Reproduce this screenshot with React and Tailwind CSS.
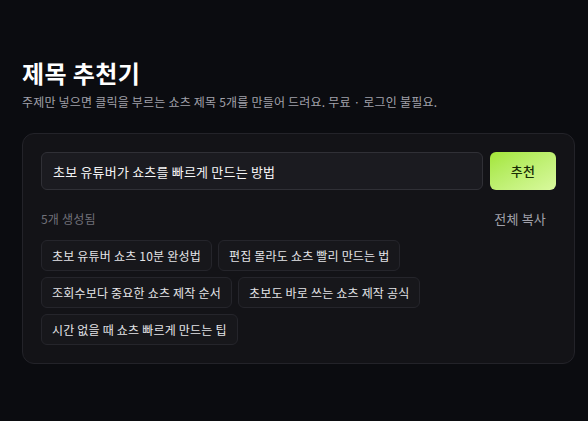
const titles = [
  '초보 유튜버 쇼츠 10분 완성법',
  '편집 몰라도 쇼츠 빨리 만드는 법',
  '조회수보다 중요한 쇼츠 제작 순서',
  '초보도 바로 쓰는 쇼츠 제작 공식',
  '시간 없을 때 쇼츠 빠르게 만드는 팁',
];

export default function App() {
  return (
    <div
      className="min-h-screen w-full bg-[#0b0c10] text-white tracking-[0.2px]"
      style={{ fontFamily: '"Noto Sans CJK KR", "Noto Sans", sans-serif' }}
    >
      <div className="pl-[22px] pr-[13px] pt-[56px]">
        <h1 className="text-[24px] font-bold leading-[34px] tracking-[0.4px]">제목 추천기</h1>
        <p className="mt-[3px] text-[12px] leading-[18px] text-[#a1a1aa]">
          주제만 넣으면 클릭을 부르는 쇼츠 제목 5개를 만들어 드려요. 무료 · 로그인 불필요.
        </p>

        {/* Main card */}
        <div className="mt-[22px] rounded-[12px] border border-[#232329] bg-[#131317] p-[18px]">
          <div className="flex gap-[7px]">
            <input
              className="h-[38px] flex-1 rounded-[6px] border border-[#303036] bg-[#1b1b20] px-[11px] text-[13px] tracking-[0.2px] text-[#f4f4f5] outline-none"
              defaultValue="초보 유튜버가 쇼츠를 빠르게 만드는 방법"
            />
            <button className="h-[38px] w-[66px] rounded-[6px] bg-gradient-to-br from-[#a3e635] to-[#d9f99d] text-[13px] font-medium text-[#1a2e05]">
              추천
            </button>
          </div>

          <div className="mt-[19px] flex h-[20px] items-center justify-between">
            <span className="text-[12px] text-[#71717a]">5개 생성됨</span>
            <button className="pr-[10px] text-[13px] text-[#a1a1aa]">전체 복사</button>
          </div>

          <div className="mt-[11px] flex flex-wrap gap-x-[6px] gap-y-[6px]">
            {titles.map((t) => (
              <button
                key={t}
                className="h-[31px] rounded-[6px] border border-[#25252b] bg-[#17171b] px-[10px] text-[12px] text-[#e4e4e7]"
              >
                {t}
              </button>
            ))}
          </div>
        </div>
      </div>
    </div>
  );
}
